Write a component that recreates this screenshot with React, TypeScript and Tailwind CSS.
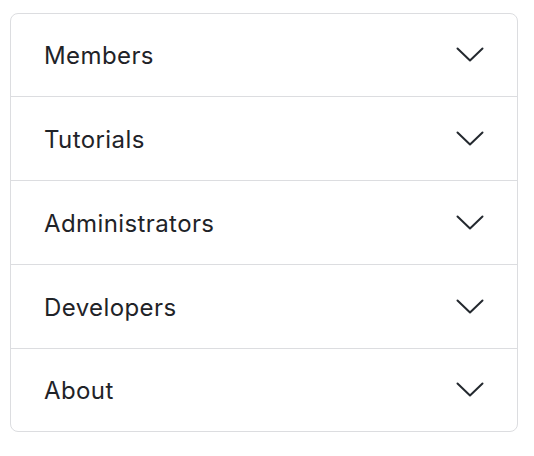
import React from 'react';

const items = ['Members', 'Tutorials', 'Administrators', 'Developers', 'About'];

const Chevron = () => (
  <svg width="28" height="16" viewBox="0 0 28 16" fill="none" className="shrink-0">
    <path d="M1.5 1.5 L14 13.5 L26.5 1.5" stroke="#24292f" strokeWidth="2" strokeLinecap="round" strokeLinejoin="round" />
  </svg>
);

export default function App() {
  return (
    <div className="min-h-screen bg-white pl-[10px] pt-[13px]" style={{ fontFamily: 'Inter, "Noto Sans", sans-serif' }}>
      <div className="w-[508px] rounded-lg border border-[#dcdde0] bg-white">
        {items.map((label, i) => {
          const last = i === items.length - 1;
          const height = i === 0 ? 'h-[83px]' : last ? 'h-[82px]' : 'h-[84px]';
          return (
            <div
              key={label}
              className={`flex ${height} items-center justify-between pl-[33px] pr-[33px] ${last ? '' : 'border-b border-[#dcdde0]'}`}
            >
              <span className="pt-[2px] text-[24px] tracking-[0.4px] text-[#1f2328]">{label}</span>
              <Chevron />
            </div>
          );
        })}
      </div>
    </div>
  );
}
